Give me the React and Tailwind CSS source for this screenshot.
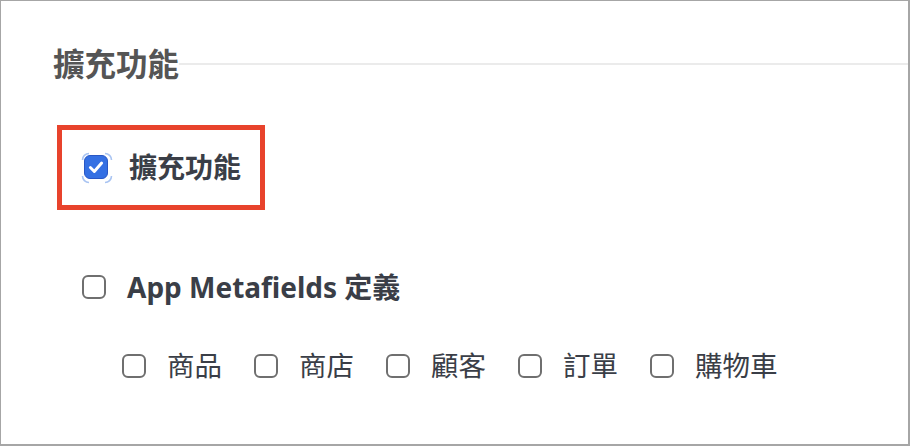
import React from 'react';

const font = { fontFamily: '"Noto Sans", "Noto Sans CJK TC", sans-serif' };

function Box({ checked }) {
  if (checked) {
    return (
      <span className="relative inline-flex h-6 w-6 shrink-0 items-center justify-center rounded-[6px] border border-[#2a57c4] bg-[#3570e3]">
        <svg width="18" height="18" viewBox="0 0 16 16" fill="none">
          <path d="M3 8.5 L6.5 12 L13 4.5" stroke="white" strokeWidth="2.6" strokeLinecap="round" strokeLinejoin="round" />
        </svg>
        {/* focus ring corners */}
        <svg className="absolute -left-[4px] -top-[4px]" width="32" height="32" viewBox="0 0 32 32" fill="none">
          <path d="M1.5 8 A6.5 6.5 0 0 1 8 1.5" stroke="#a9c4f2" strokeWidth="1.6" />
          <path d="M24 1.5 A6.5 6.5 0 0 1 30.5 8" stroke="#a9c4f2" strokeWidth="1.6" />
          <path d="M30.5 24 A6.5 6.5 0 0 1 24 30.5" stroke="#a9c4f2" strokeWidth="1.6" />
          <path d="M8 30.5 A6.5 6.5 0 0 1 1.5 24" stroke="#a9c4f2" strokeWidth="1.6" />
        </svg>
      </span>
    );
  }
  return <span className="inline-block h-6 w-6 shrink-0 rounded-[6px] border-2 border-[#6f6f6f] bg-white"></span>;
}

const targets = ['商品', '商店', '顧客', '訂單', '購物車'];

export default function App() {
  return (
    <div style={font} className="h-[446px] w-[910px] border-l border-t border-r-2 border-b-2 border-[#a6a6a6] bg-white">
      {/* fieldset-like heading */}
      <div className="mt-[47px] flex items-center pl-[52px]">
        <h2 className="text-[31.5px] font-semibold leading-none text-[#555555]">擴充功能</h2>
        <div className="h-[2px] flex-1 bg-[#ebebeb]"></div>
      </div>

      <div className="ml-[56px] mt-[45px] flex h-[85px] w-[208px] items-center gap-[21px] border-[5px] border-[#e8432c] pl-[22px]">
        <Box checked />
        <span className="text-[28px] font-bold leading-none text-[#3a3e47]">擴充功能</span>
      </div>

      <div className="ml-[81px] mt-[64px] flex h-[26px] items-center gap-[21px]">
        <Box />
        <span className="text-[28px] font-bold leading-none text-[#3a3e47]">App Metafields 定義</span>
      </div>

      <div className="ml-[121px] mt-[53px] flex h-[27px] items-center gap-[32px]">
        {targets.map(t => (
          <label key={t} className="flex items-center gap-[21px]">
            <Box />
            <span className="text-[27.5px] leading-none text-[#3a3e47]">{t}</span>
          </label>
        ))}
      </div>
    </div>
  );
}
